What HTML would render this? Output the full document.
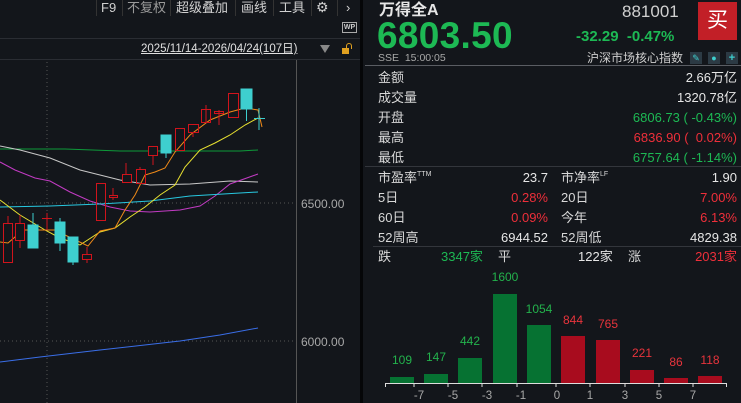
<!DOCTYPE html>
<html><head><meta charset="utf-8"><style>
*{margin:0;padding:0;box-sizing:border-box}
body{width:741px;height:403px;background:#13161b;overflow:hidden;position:relative;font-family:"Liberation Sans","Noto Sans CJK SC",sans-serif;color:#d8d8d8}
.a{position:absolute;white-space:nowrap;line-height:1}
.g{color:#1db954}.r{color:#ee2f3a}.w{color:#e6e6e6}.gr{color:#c0c0c0}
.tb{font-size:13px;color:#d0d0d0;top:1px}
.row{position:absolute;left:378px;width:359px;font-size:13px;height:16px}
.row span{position:absolute;top:0;line-height:16px}
.row span i{font-style:normal;font-size:7px;vertical-align:top;line-height:9px}
</style></head><body>
<div class="a" style="left:0;top:0;width:361px;height:17px;background:#13161b"></div>
<div class="a" style="left:96px;top:0;width:1px;height:16px;background:#333"></div>
<div class="a" style="left:122px;top:0;width:1px;height:16px;background:#333"></div>
<div class="a" style="left:170px;top:0;width:1px;height:16px;background:#333"></div>
<div class="a" style="left:235px;top:0;width:1px;height:16px;background:#333"></div>
<div class="a" style="left:273px;top:0;width:1px;height:16px;background:#333"></div>
<div class="a" style="left:311px;top:0;width:1px;height:16px;background:#333"></div>
<div class="a" style="left:337px;top:0;width:1px;height:16px;background:#333"></div>
<div class="a tb" style="left:101px">F9</div>
<div class="a tb" style="left:127px;color:#9a9a9a">不复权</div>
<div class="a tb" style="left:176px">超级叠加</div>
<div class="a tb" style="left:241px">画线</div>
<div class="a tb" style="left:279px">工具</div>
<div class="a tb" style="left:316px;font-size:14px;top:0">⚙</div>
<div class="a tb" style="left:346px">›</div>
<div class="a" style="left:342px;top:22px;width:15px;height:11px;border:1px solid #aaa;font-size:7px;color:#ccc;text-align:center;line-height:9px;font-weight:bold">WP</div>
<div class="a" style="left:0;top:38px;width:361px;height:1px;background:#2a2d33"></div>
<div class="a" style="left:141px;top:44px;font-size:11.5px;color:#e0e0e0;text-decoration:underline">2025/11/14-2026/04/24(107日)</div>
<div class="a" style="left:320px;top:45px;width:0;height:0;border-left:5px solid transparent;border-right:5px solid transparent;border-top:8px solid #888"></div>
<div class="a" style="left:342px;top:48px;width:7px;height:6px;background:#e0a020"></div>
<div class="a" style="top:43px;width:6px;height:6px;border:1.5px solid #e0a020;border-bottom:none;border-radius:3px 3px 0 0;left:346px"></div>
<div class="a" style="left:0;top:59px;width:361px;height:1px;background:#2a2d33"></div>
<div class="a" style="left:360px;top:0;width:3px;height:403px;background:#050608"></div>

<svg class="a" style="left:0;top:0" width="361" height="403">
<line x1="47" y1="62" x2="47" y2="403" stroke="#555" stroke-dasharray="1,3"/>
<line x1="0" y1="203" x2="296" y2="203" stroke="#555" stroke-dasharray="1,3"/>
<line x1="0" y1="341" x2="296" y2="341" stroke="#555" stroke-dasharray="1,3"/>
<line x1="296.5" y1="60" x2="296.5" y2="403" stroke="#555"/>
<text x="301" y="208" font-size="12" fill="#a8a8a8" font-family="Liberation Sans">6500.00</text>
<text x="301" y="346" font-size="12" fill="#a8a8a8" font-family="Liberation Sans">6000.00</text>
<g fill="none" stroke-width="1">
<polyline stroke="#0e9a3a" points="0,149 65,149 120,151 240,151 258,150"/>
<polyline stroke="#c8c8c8" points="0,146 20,150 50,158 80,170 100,175 120,180 150,185 190,184 230,181 258,182"/>
<polyline stroke="#c23bc3" points="0,162 15,170 35,178 50,181 70,192 90,201 110,207 130,211 150,212 180,210 200,206 215,196 230,184 258,174"/>
<polyline stroke="#28c8e0" points="0,207 50,206 100,204 150,201 190,196 240,193 258,192"/>
<polyline stroke="#3a6ee8" points="0,362 40,357 100,350 180,341 220,335 258,328"/>
<polyline stroke="#e8e030" points="0,200 20,215 45,230 60,238 80,245 100,232 115,228 130,217 145,207 160,195 175,185 185,167 200,150 215,143 230,135 245,125 258,118"/>
<polyline stroke="#f08a18" points="0,242 8,243 15,237 20,230 55,230 65,235 88,246 100,231 115,228 125,210 135,195 145,175 155,172 165,168 175,152 190,135 210,120 230,112 245,108 258,110 262,127"/>
</g>
<g stroke="#d0141c" fill="none">
<line x1="8" y1="216" x2="8" y2="223"/><rect x="3.5" y="223.5" width="9" height="39"/>
<line x1="20" y1="215" x2="20" y2="248"/><rect x="15.5" y="223.5" width="9" height="17" fill="#13161b"/>
<line x1="47" y1="213" x2="47" y2="230"/><line x1="42" y1="218.5" x2="52" y2="218.5"/>
<line x1="87" y1="247" x2="87" y2="263"/><rect x="82.5" y="254.5" width="9" height="5" fill="#13161b"/>
<rect x="96.5" y="183.5" width="9" height="37"/>
<line x1="113" y1="188" x2="113" y2="200"/><rect x="109.5" y="195.5" width="8" height="2" fill="#13161b"/>
<line x1="126" y1="163" x2="126" y2="183"/><rect x="122.5" y="174.5" width="9" height="8" fill="#13161b"/>
<line x1="140" y1="167" x2="140" y2="170"/><rect x="136.5" y="169.5" width="9" height="14"/>
<line x1="153" y1="155" x2="153" y2="165"/><rect x="148.5" y="146.5" width="9" height="9" fill="#13161b"/>
<rect x="175.5" y="128.5" width="9" height="22"/>
<line x1="193" y1="132" x2="193" y2="137"/><rect x="188.5" y="124.5" width="10" height="8"/>
<line x1="206" y1="105" x2="206" y2="123"/><rect x="201.5" y="109.5" width="9" height="13"/>
<line x1="219" y1="110" x2="219" y2="125"/><rect x="214.5" y="111.5" width="9" height="2"/>
<rect x="228.5" y="93.5" width="10" height="24"/>
</g>
<g fill="#3ecfcf" stroke="#3ecfcf">
<rect x="28" y="225" width="10" height="23"/><line x1="33" y1="213" x2="33" y2="225"/>
<rect x="55" y="222" width="10" height="21"/><line x1="60" y1="218" x2="60" y2="251"/>
<rect x="68" y="237" width="10" height="25"/><line x1="73" y1="262" x2="73" y2="265"/>
<rect x="161" y="135" width="10" height="18"/><line x1="166" y1="153" x2="166" y2="158"/>
<rect x="241" y="89" width="11" height="20"/><line x1="246.5" y1="109" x2="246.5" y2="121"/>
<line x1="259" y1="108" x2="259" y2="130" /><line x1="254" y1="118.5" x2="265" y2="118.5"/>
</g>
</svg>

<div class="a w" style="left:379px;top:3px;font-size:16px;font-weight:bold">万得全A</div>
<div class="a" style="left:622px;top:3px;font-size:17px;color:#d0d0d0">881001</div>
<div class="a" style="left:698px;top:2px;width:39px;height:38px;background:#c21f27;color:#fff;font-size:21px;text-align:center;line-height:38px">买</div>
<div class="a g" style="left:377px;top:17px;font-size:37px;font-weight:bold;letter-spacing:0.3px">6803.50</div>
<div class="a g" style="left:576px;top:29px;font-size:15px;font-weight:bold">-32.29&nbsp;&nbsp;-0.47%</div>
<div class="a" style="left:378px;top:53px;font-size:10.5px;color:#a8a8a8">SSE&nbsp;&nbsp;15:00:05</div>
<div class="a" style="left:587px;top:52px;font-size:12px;color:#cfcfcf">沪深市场核心指数</div>
<div class="a" style="left:690px;top:52px;width:12px;height:12px;background:#2c3a44;color:#3ecfcf;font-size:9px;text-align:center;line-height:12px">✎</div>
<div class="a" style="left:708px;top:52px;width:12px;height:12px;background:#2c3a44;color:#3ecfcf;font-size:9px;text-align:center;line-height:12px">●</div>
<div class="a" style="left:726px;top:52px;width:12px;height:12px;background:#2c3a44;color:#3ecfcf;font-size:11px;text-align:center;line-height:12px;font-weight:bold">+</div>
<div class="a" style="left:365px;top:65px;width:376px;height:1px;background:#5a5d63"></div>

<div class="row" style="top:70px"><span style="left:0">金额</span><span class="w" style="right:0">2.66万亿</span></div>
<div class="row" style="top:90px"><span style="left:0">成交量</span><span class="w" style="right:0">1320.78亿</span></div>
<div class="row" style="top:110px"><span style="left:0">开盘</span><span class="g" style="right:0">6806.73 ( -0.43%)</span></div>
<div class="row" style="top:130px"><span style="left:0">最高</span><span class="r" style="right:0">6836.90 (&nbsp; 0.02%)</span></div>
<div class="row" style="top:150px"><span style="left:0">最低</span><span class="g" style="right:0">6757.64 ( -1.14%)</span></div>
<div class="a" style="left:365px;top:166px;width:376px;height:1px;background:#33363c"></div>

<div class="row" style="top:170px"><span style="left:0">市盈率<i>TTM</i></span><span class="w" style="right:189px">23.7</span><span style="left:183px">市净率<i>LF</i></span><span class="w" style="right:0">1.90</span></div>
<div class="row" style="top:190px"><span style="left:0">5日</span><span class="r" style="right:189px">0.28%</span><span style="left:183px">20日</span><span class="r" style="right:0">7.00%</span></div>
<div class="row" style="top:210px"><span style="left:0">60日</span><span class="r" style="right:189px">0.09%</span><span style="left:183px">今年</span><span class="r" style="right:0">6.13%</span></div>
<div class="row" style="top:230px"><span style="left:0">52周高</span><span class="w" style="right:189px">6944.52</span><span style="left:183px">52周低</span><span class="w" style="right:0">4829.38</span></div>
<div class="a" style="left:373px;top:246px;width:368px;height:1px;background:#33363c"></div>
<div class="row" style="top:249px"><span style="left:0">跌</span><span class="g" style="left:63px">3347家</span><span style="left:120px">平</span><span class="w" style="left:200px">122家</span><span style="left:250px">涨</span><span class="r" style="right:0">2031家</span></div>

<svg class="a" style="left:365px;top:270px" width="376" height="133" font-family="Liberation Sans" font-size="12">
<g transform="translate(-365,-270)">
<g fill="#067232">
<rect x="390" y="377" width="24" height="6"/><rect x="424" y="374" width="24" height="9"/><rect x="458" y="358" width="24" height="25"/><rect x="493" y="294" width="24" height="89"/><rect x="527" y="325" width="24" height="58"/>
</g>
<g fill="#a80c1e">
<rect x="561" y="336" width="24" height="47"/><rect x="596" y="340" width="24" height="43"/><rect x="630" y="370" width="24" height="13"/><rect x="664" y="378" width="24" height="5"/><rect x="698" y="376" width="24" height="7"/>
</g>
<g fill="#23b24c" text-anchor="middle">
<text x="402" y="364">109</text><text x="436" y="361">147</text><text x="470" y="345">442</text><text x="505" y="281">1600</text><text x="539" y="313">1054</text>
</g>
<g fill="#e8343c" text-anchor="middle">
<text x="573" y="324">844</text><text x="608" y="328">765</text><text x="642" y="357">221</text><text x="676" y="366">86</text><text x="710" y="364">118</text>
</g>
<line x1="385" y1="383.5" x2="727" y2="383.5" stroke="#ddd"/>
<g stroke="#ddd">
<line x1="385.5" y1="383" x2="385.5" y2="387"/><line x1="414" y1="383" x2="414" y2="387"/><line x1="448" y1="383" x2="448" y2="387"/><line x1="482" y1="383" x2="482" y2="387"/><line x1="517" y1="383" x2="517" y2="387"/><line x1="556" y1="383" x2="556" y2="387"/><line x1="590" y1="383" x2="590" y2="387"/><line x1="625" y1="383" x2="625" y2="387"/><line x1="659" y1="383" x2="659" y2="387"/><line x1="693" y1="383" x2="693" y2="387"/><line x1="726.5" y1="383" x2="726.5" y2="387"/>
</g>
<g fill="#a8a8a8" text-anchor="middle" font-size="11.5">
<text x="419" y="399">-7</text><text x="453" y="399">-5</text><text x="487" y="399">-3</text><text x="521" y="399">-1</text><text x="557" y="399">0</text><text x="590" y="399">1</text><text x="625" y="399">3</text><text x="659" y="399">5</text><text x="693" y="399">7</text>
</g>
</g>
</svg>
</body></html>
